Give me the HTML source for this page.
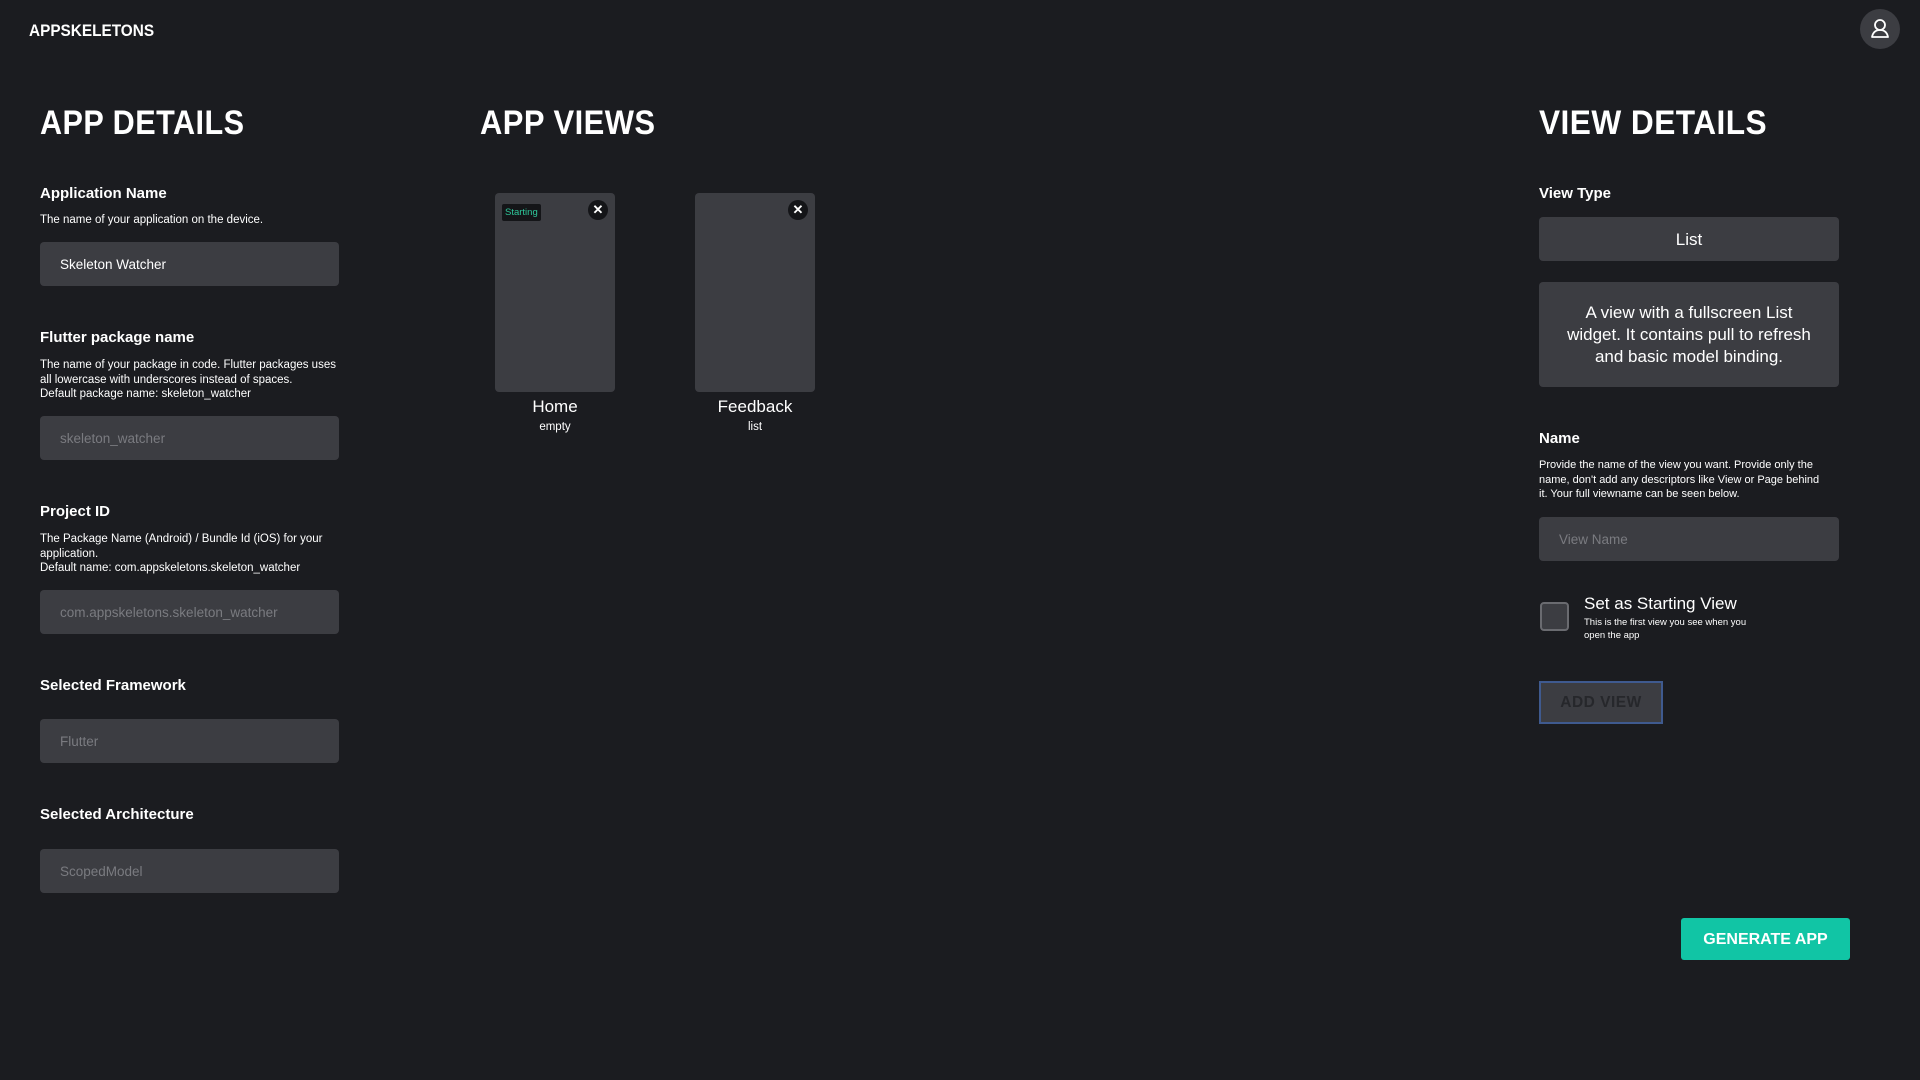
<!DOCTYPE html>
<html><head><meta charset="utf-8"><style>
*{margin:0;padding:0;box-sizing:border-box}
body{width:1920px;height:1080px;background:#1b1c20;color:#fff;font-family:"Liberation Sans",sans-serif;position:relative;overflow:hidden}
.a{position:absolute;white-space:nowrap}
.h1{font-size:34px;font-weight:bold;letter-spacing:0.5px;transform-origin:left top}
.lbl{font-size:15px;font-weight:bold}
.d{font-size:11.5px;line-height:14.6px}
.in{position:absolute;background:#3c3d42;border-radius:4px;height:44px;width:299px;font-size:13.5px;line-height:45px;padding-left:20px;color:#7a7b80}
.card{position:absolute;width:120px;height:199px;background:#3c3d42;border-radius:4px;top:193px}
.x{position:absolute;width:20px;height:20px;border-radius:50%;background:#141518;top:7px;right:7px;color:#fff;font-size:13px;text-align:center;line-height:20px;font-weight:bold}
.cl{position:absolute;width:120px;text-align:center}
</style></head><body>
<div class="a" style="left:29px;top:22px;font-size:16.5px;font-weight:bold;transform:scaleX(0.93);transform-origin:left top">APPSKELETONS</div>
<div class="a" style="left:1860px;top:9px;width:40px;height:40px;border-radius:50%;background:#3c3d42">
<svg width="40" height="40" viewBox="0 0 40 40"><circle cx="20" cy="16" r="5" fill="none" stroke="#fff" stroke-width="1.8"/><path d="M12 28c1-5 4-7 8-7s7 2 8 7z" fill="none" stroke="#fff" stroke-width="1.8" stroke-linejoin="round"/></svg></div>

<div class="a h1" style="left:40px;top:104px;transform:scaleX(0.9)">APP DETAILS</div>
<div class="a lbl" style="left:40px;top:185px">Application Name</div>
<div class="a d" style="left:40px;top:213px">The name of your application on the device.</div>
<div class="in" style="left:40px;top:242px;color:#fff">Skeleton Watcher</div>
<div class="a lbl" style="left:40px;top:329px">Flutter package name</div>
<div class="a d" style="left:40px;top:358px">The name of your package in code. Flutter packages uses<br>all lowercase with underscores instead of spaces.<br>Default package name: skeleton_watcher</div>
<div class="in" style="left:40px;top:416px">skeleton_watcher</div>
<div class="a lbl" style="left:40px;top:503px">Project ID</div>
<div class="a d" style="left:40px;top:532px">The Package Name (Android) / Bundle Id (iOS) for your<br>application.<br>Default name: com.appskeletons.skeleton_watcher</div>
<div class="in" style="left:40px;top:590px">com.appskeletons.skeleton_watcher</div>
<div class="a lbl" style="left:40px;top:677px">Selected Framework</div>
<div class="in" style="left:40px;top:719px">Flutter</div>
<div class="a lbl" style="left:40px;top:806px">Selected Architecture</div>
<div class="in" style="left:40px;top:849px">ScopedModel</div>

<div class="a h1" style="left:480px;top:104px;transform:scaleX(0.91)">APP VIEWS</div>
<div class="card" style="left:495px"><div class="a" style="left:7px;top:11px;background:#141518;color:#2ec79a;font-size:9.5px;padding:3px 3px;border-radius:2px">Starting</div><div class="x">✕</div></div>
<div class="cl" style="left:495px;top:397px;font-size:17px">Home</div>
<div class="cl" style="left:495px;top:421px;font-size:11.5px">empty</div>
<div class="card" style="left:695px"><div class="x">✕</div></div>
<div class="cl" style="left:695px;top:397px;font-size:17px">Feedback</div>
<div class="cl" style="left:695px;top:421px;font-size:11.5px">list</div>

<div class="a h1" style="left:1539px;top:104px;transform:scaleX(0.93)">VIEW DETAILS</div>
<div class="a lbl" style="left:1539px;top:185px">View Type</div>
<div class="in" style="left:1539px;top:217px;width:300px;color:#fff;text-align:center;padding:0;font-size:17px">List</div>
<div class="a" style="left:1539px;top:282px;width:300px;height:105px;background:#3c3d42;border-radius:4px;text-align:center;font-size:17px;line-height:22px;padding-top:20px;white-space:normal">A view with a fullscreen List<br>widget. It contains pull to refresh<br>and basic model binding.</div>
<div class="a lbl" style="left:1539px;top:430px">Name</div>
<div class="a d" style="left:1539px;top:458px;font-size:11px">Provide the name of the view you want. Provide only the<br>name, don't add any descriptors like View or Page behind<br>it. Your full viewname can be seen below.</div>
<div class="in" style="left:1539px;top:517px;width:300px">View Name</div>
<div class="a" style="left:1540px;top:602px;width:29px;height:29px;border:2px solid #6a6b70;border-radius:4px;background:#3c3d42"></div>
<div class="a" style="left:1584px;top:594px;font-size:17px">Set as Starting View</div>
<div class="a" style="left:1584px;top:617px;font-size:9.5px;line-height:12.5px">This is the first view you see when you<br>open the app</div>
<div class="a" style="left:1539px;top:681px;width:124px;height:43px;border:2px solid #3f5a8f;background:#3c3d42;color:#26272b;font-weight:bold;font-size:15.5px;text-align:center;line-height:40px;letter-spacing:0.5px">ADD VIEW</div>
<div class="a" style="left:1681px;top:918px;width:169px;height:42px;background:#11c5a5;border-radius:3px;font-weight:bold;font-size:16px;text-align:center;line-height:43px">GENERATE APP</div>
</body></html>
